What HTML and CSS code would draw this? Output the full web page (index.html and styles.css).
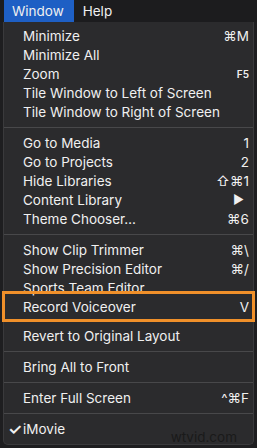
FILE: index.html
```html
<!DOCTYPE html>
<html lang="en">
<head>
  <meta charset="UTF-8" />
  <title>Window menu</title>
  <link rel="stylesheet" href="styles.css">
</head>
<body>
  <div class="menubar">
    <span class="top active">Window</span>
    <span class="top">Help</span>
  </div>

  <div class="menu">
    <div class="group">
      <div class="item"><span>Minimize</span><span class="key">⌘M</span></div>
      <div class="item"><span>Minimize All</span></div>
      <div class="item"><span>Zoom</span><span class="key small">F5</span></div>
      <div class="item"><span>Tile Window to Left of Screen</span></div>
      <div class="item"><span>Tile Window to Right of Screen</span></div>
    </div>
    <div class="group">
      <div class="item"><span>Go to Media</span><span class="key">1</span></div>
      <div class="item"><span>Go to Projects</span><span class="key">2</span></div>
      <div class="item"><span>Hide Libraries</span><span class="key">⇧⌘1</span></div>
      <div class="item"><span>Content Library</span><span class="key arrow">▶</span></div>
      <div class="item"><span>Theme Chooser…</span><span class="key">⌘6</span></div>
    </div>
    <div class="group">
      <div class="item"><span>Show Clip Trimmer</span><span class="key">⌘\</span></div>
      <div class="item"><span>Show Precision Editor</span><span class="key">⌘/</span></div>
      <div class="item"><span>Sports Team Editor</span></div>
      <div class="item marked"><span>Record Voiceover</span><span class="key">V</span></div>
      <div class="item"><span>Revert to Original Layout</span></div>
    </div>
    <div class="group">
      <div class="item"><span>Bring All to Front</span></div>
    </div>
    <div class="group">
      <div class="item"><span>Enter Full Screen</span><span class="key">^⌘F</span></div>
    </div>
    <div class="group">
      <div class="item"><span class="check">✓</span><span>iMovie</span></div>
    </div>
  </div>
  <div class="watermark">wtvid.com</div>
</body>
</html>
```

FILE: styles.css
```css
body {
  margin: 0;
  width: 257px;
  height: 448px;
  background: #1e1e20;
  font-family: Inter, "Noto Sans", sans-serif;
  font-size: 13.5px;
  color: #f0f0f0;
  overflow: hidden;
  position: relative;
}
.menubar {
  height: 22px;
  display: flex;
  align-items: stretch;
  background: #1c1c1e;
}
.top {
  display: flex;
  align-items: center;
  padding: 0 7px 0 9px;
  font-size: 13.5px;
}
.top.active {
  margin-left: 4px;
  padding: 0 10px 0 8px;
  background: #1e5fc4;
}
.menu {
  margin: 0 3px;
  height: 423px;
  box-sizing: border-box;
  background: #2b2b2d;
  border: 1px solid #3a3a3c;
  border-top: none;
  border-radius: 0 0 5px 5px;
  padding-top: 4px;
}
.group {
  padding: 5px 0 6px;
  border-bottom: 1px solid #48484a;
}
.group:first-child {
  padding-top: 0;
}
.group:last-child {
  border-bottom: none;
}
.item {
  position: relative;
  height: 19px;
  display: flex;
  align-items: center;
  justify-content: space-between;
  padding: 0 4px 0 19px;
}
.key.small {
  font-size: 10px;
  font-weight: 600;
}
.key.arrow {
  font-size: 12px;
  margin-right: 5px;
}
.check {
  position: absolute;
  left: 4px;
  font-size: 16px;
  font-weight: 600;
}
.marked {
  margin: 0 4px;
  padding: 0 0 0 15px;
  outline: 3px solid #f0902a;
  outline-offset: 3px;
}
.marked + .item {
  margin-top: 10px;
}
.watermark {
  position: absolute;
  right: 20px;
  bottom: 3px;
  font-size: 13.5px;
  color: #1a1a1a;
}
```
